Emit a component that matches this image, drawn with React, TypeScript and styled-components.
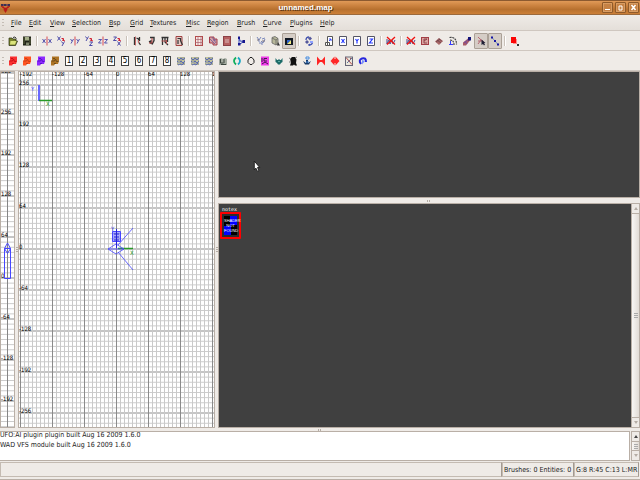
import React from "react";
import styled, { createGlobalStyle, css } from "styled-components";

const Global = createGlobalStyle`
  *, *::before, *::after { box-sizing: border-box; }
  html, body { margin: 0; padding: 0; background: #efebe7; }
  body { font-family: "DejaVu Sans Condensed", "DejaVu Sans", sans-serif; font-size: 7px; color: #222; }
  button { font: inherit; color: inherit; margin: 0; padding: 0; border: 0; background: none; }
  svg { display: block; }
`;

const Window = styled.div`
  display: flex;
  flex-direction: column;
  height: 100vh;
  overflow: hidden;
  background: #efebe7;
`;

const TitleBar = styled.header`
  display: grid;
  grid-template-columns: 12px 1fr 41px;
  align-items: center;
  flex: none;
  height: 15px;
  border-top: 1px solid #8c5a30;
  border-bottom: 1px solid #9c6a3c;
  background: linear-gradient(#e09a58, #cf8643 30%, #b8712f 65%, #cc8038);
`;

const Title = styled.h1`
  margin: 0;
  font-family: "Liberation Sans", sans-serif;
  font-size: 8px;
  line-height: 12px;
  text-align: center;
  color: #fff;
  text-shadow: 1px 1px 0 #5e3512;
`;

const WindowButtons = styled.div`
  display: flex;
  justify-content: flex-end;
  gap: 2px;
  padding-right: 1px;
`;

const WindowButton = styled.button`
  display: grid;
  place-items: center;
  width: 11px;
  height: 11px;
  border: 1px solid #8f5a2a;
  border-radius: 1px;
  background: #c68245;
  box-shadow: inset 0 0 0 1px #d99c62;
`;

const MenuBar = styled.nav`
  display: flex;
  align-items: center;
  flex: none;
  height: 16px;
  padding-left: 2px;
  border-bottom: 1px solid #cfc7c0;
  background: linear-gradient(#efebe7, #e4dfd9);
`;

const MenuList = styled.div`
  display: flex;
  gap: 7px;
  padding-left: 5px;
`;

const MenuItem = styled.button<{ $w: number }>`
  flex: none;
  width: ${(p) => p.$w}px;
  line-height: 12px;
  text-align: left;
  white-space: nowrap;
`;

const ToolBar = styled.div`
  display: flex;
  align-items: center;
  flex: none;
  height: 20px;
  padding-left: 2px;
  border-bottom: 1px solid #cfc7c0;
`;

const Grip = styled.span`
  flex: none;
  width: 2px;
  height: 8px;
  margin-right: 2px;
  background: repeating-linear-gradient(#c5bdb5 0 1px, transparent 1px 3px);
`;

const ToolButton = styled.button<{ $on?: boolean }>`
  display: grid;
  place-items: center;
  flex: none;
  width: 14px;
  height: 16px;
  border-radius: 1px;
  ${(p) =>
    p.$on &&
    css`
      border: 1px solid #aaa096;
      background: #d5cdc6;
    `}
`;

const Separator = styled.span`
  flex: none;
  width: 6px;
  height: 10px;
  background: linear-gradient(90deg, transparent 2px, #c9c1b9 2px 3px, #fff 3px 4px, transparent 4px);
`;

const NumberBox = styled.span`
  display: block;
  width: 8px;
  height: 10px;
  border: 1px solid #444;
  background: #fff;
  color: #000;
  font-size: 8px;
  line-height: 8px;
  text-align: center;
`;

const Work = styled.main`
  display: grid;
  grid-template-columns: 15px 3px minmax(0, 197fr) 3px minmax(0, 422fr);
  flex: 1;
  min-height: 0;
`;

const Column = styled.div`
  display: grid;
  grid-template-rows: minmax(0, 127fr) 5px minmax(0, 225fr);
  min-height: 0;
`;

const Pane = styled.section<{ $dark?: boolean }>`
  display: flex;
  min-width: 0;
  min-height: 0;
  overflow: hidden;
  border: 1px solid #b9afa6;
  background: ${(p) => (p.$dark ? "#404040" : "#fff")};
`;

const Canvas = styled.svg`
  flex: 1;
  min-width: 0;
  height: 100%;
`;

const Label = styled.text`
  font-family: "DejaVu Sans Condensed", sans-serif;
  font-size: 6px;
`;

const Handle = styled.div<{ $row?: boolean }>`
  display: grid;
  place-items: center;
  flex: none;
  ${(p) => p.$row && "height: 3px;"}
  &::before {
    content: "";
    width: ${(p) => (p.$row ? 4 : 2)}px;
    height: ${(p) => (p.$row ? 2 : 5)}px;
    background: repeating-linear-gradient(
      ${(p) => (p.$row ? "90deg" : "180deg")}, #b5ada5 0 1px, transparent 1px 2px);
  }
`;

const PaneHandle = styled(Handle)`
  align-self: center;
`;

const Textures = styled.div`
  flex: 1;
  padding: 3px 1px;
`;

const Tile = styled.figure`
  display: flex;
  flex-direction: column;
  width: 21px;
  margin: 0;
`;

const TileName = styled.figcaption`
  padding-left: 2px;
  font: 5px/5px "DejaVu Sans Mono", monospace;
  color: #fff;
`;

const TileImage = styled.div`
  height: 27px;
  padding: 2px;
  border: 2px solid #f00;
  border-radius: 1px;
  display: flex;
  flex-direction: column;
  justify-content: center;
  background: conic-gradient(#00f 0 25%, #000 0 50%, #00f 0 75%, #000 0) content-box, #2c2c2c;
  color: #fff;
  font: 4px/5px "Liberation Sans", sans-serif;
  text-align: center;
`;

const Scroll = styled.div`
  display: flex;
  flex-direction: column;
  flex: none;
  width: 8px;
  border-left: 1px solid #b9afa6;
  background: #d6cec6;
`;

const ScrollButton = styled.button`
  display: grid;
  place-items: center;
  flex: none;
  height: 9px;
  background: #efebe7;
`;

const Thumb = styled.div`
  display: grid;
  place-items: center;
  flex: 1;
  border: solid #b9afa6;
  border-width: 1px 0;
  background: linear-gradient(90deg, #f8f6f4, #e2dcd6);
  &::before {
    content: "";
    width: 4px;
    height: 5px;
    background: repeating-linear-gradient(#aaa 0 1px, transparent 1px 2px);
  }
`;

const Console = styled.section`
  display: flex;
  flex: none;
  gap: 1px;
  height: 30px;
`;

const Log = styled.div`
  display: flex;
  flex-direction: column;
  justify-content: flex-end;
  flex: 1;
  overflow: hidden;
  padding-bottom: 10px;
  border: 1px solid #b9afa6;
  border-left-width: 0;
  background: #fff;
`;

const LogLine = styled.p`
  flex: none;
  margin: 0;
  line-height: 10px;
  white-space: nowrap;
`;

const ConsoleScroll = styled(Scroll)`
  border: 1px solid #b9afa6;
  width: 9px;
`;

const StatusBar = styled.footer`
  display: grid;
  grid-template-columns: 1fr 72px 65px;
  flex: none;
  height: 19px;
  padding: 1px 1px 2px 0;
  border-bottom: 1px solid #b9afa6;
`;

const StatusCell = styled.div`
  padding-left: 1px;
  border: 1px solid #c4bbb2;
  border-right-color: #a39a91;
  overflow: hidden;
  white-space: nowrap;
  line-height: 15px;
`;

const Pointer = styled.svg`
  position: absolute;
  left: 253px;
  top: 160px;
  pointer-events: none;
`;

const menus: [string, number][] = [
  ["File", 11], ["Edit", 14], ["View", 15], ["Selection", 30], ["Bsp", 14], ["Grid", 13], ["Textures", 29],
  ["Misc", 14], ["Region", 23], ["Brush", 19], ["Curve", 20], ["Plugins", 23], ["Help", 16],
];

const NAVY = "#23239a";
const RED = "#d02030";

const letterPath: Record<string, [string, string]> = {
  x: ["M0.5 3l3 4M3.5 3l-3 4", "M6.5 3l3 4M9.5 3l-3 4"],
  y: ["M0.5 3l1.5 2M3.5 3l-2.5 4.5", "M6.5 3l1.5 2M9.5 3l-2.5 4.5"],
  z: ["M0.5 3.5h3l-3 3.5h3", "M6.5 3.5h3l-3 3.5h3"],
};

const flip = (axis: string) => (
  <>
    <path d={letterPath[axis].join("")} stroke={NAVY} strokeOpacity=".75" fill="none" />
    <path d="M5 0.5v9" stroke={RED} strokeOpacity=".8" />
  </>
);

const turn = (axis: string) => (
  <>
    <path d={letterPath[axis][0]} transform="translate(1 -2.5)" stroke={NAVY} strokeOpacity=".8" fill="none" />
    <path d={letterPath[axis === "x" ? "y" : axis === "y" ? "z" : "x"][0]} transform="translate(5 2.5)" stroke={NAVY} strokeOpacity=".8" fill="none" />
    <path d="M5.5 2.500h2v2.500M6 4l3 1" stroke={RED} fill="none" />
  </>
);

const paint = (a: string, b: string) => (
  <>
    <path d="M2 0.5h7v4.500l-1 3h-3l-1 1.500h-3v-5h1z" fill={a} />
    <path d="M1.5 5h3l1-2 1 2.500h2M3 2.500h2M4 7.500h2" stroke={b} fill="none" />
  </>
);

const axisBox = (d: string) => (
  <>
    <path d="M1.5 0.5h7v9h-7z" fill="#fff" stroke="#556" />
    <path d={d} stroke="#2438ff" strokeWidth="1.2" fill="none" />
  </>
);

const cross = (
  <>
    <path d="M1 3v5l2-4 1 4 2-4 1 4 2-4" stroke="#4a4a8c" fill="none" />
    <path d="M1 1l8 7.500M9 1l-8 7.500" stroke="#f01010" strokeWidth="1.300" />
  </>
);

const waves = (
  <>
    <rect x="1" y="1" width="8" height="8" fill="#a9ac96" />
    <path d="M1 2l2 2 2-2 2 2 2-2M1 5l2 2 2-2 2 2 2-2M2 9l2-1 2 1 2-2" stroke="#5a6ab5" fill="none" />
    <path d="M3 1v2M7 4v2M2 7h2" stroke="#d8d8a8" />
  </>
);

const icons: Record<string, React.ReactNode> = {
  Open: (
    <>
      <path d="M1 2h3l1 1h3v2h1.500l-2 4.500h-6.500z" fill="#7a832c" stroke="#262b10" strokeWidth=".7" />
      <path d="M2.500 5h6l-1.500 3.500h-5z" fill="#dbe47c" />
      <path d="M5 1.500q2-1.500 3.500 1" stroke="#333" fill="none" />
    </>
  ),
  Save: (
    <>
      <rect x="1" y="0.5" width="8" height="9" fill="#202318" />
      <rect x="3" y="1" width="4" height="3.5" fill="#a4ae88" />
      <rect x="4" y="6.5" width="3" height="3" fill="#80866e" />
      <path d="M2 1v7M8 2v6" stroke="#6c754b" strokeWidth=".8" />
    </>
  ),
  "Flip x": flip("x"), "Rotate x": turn("x"),
  "Flip y": flip("y"), "Rotate y": turn("y"),
  "Flip z": flip("z"), "Rotate z": turn("z"),
  "Complete tall": (
    <>
      <path d="M2.500 1v8M4.500 2l2 1v3l2 3M7.500 1v4" stroke="#333" strokeWidth="1.300" fill="none" />
      <path d="M3.500 0.500v9M6.500 4v3" stroke="#c46a6a" />
    </>
  ),
  "Partial tall": (
    <>
      <path d="M4 1.500h4v3l-2 4M3 6l2-1v3" stroke="#333" strokeWidth="1.400" fill="none" />
      <path d="M6 2v5M3 7h3" stroke="#b34242" />
    </>
  ),
  "Select touching": (
    <>
      <path d="M1.500 1.500h7M2.500 1v8M5 2v4l3 3M7.500 2v4" stroke="#333" strokeWidth="1.300" fill="none" />
      <path d="M1.500 5h5M6.500 4v4" stroke="#b35252" />
    </>
  ),
  "Select inside": (
    <>
      <path d="M2 0.500h6v9h-6z" fill="#e4c9c4" stroke="#a04242" />
      <path d="M3.500 2.500h3v2l2 4.500M4 4v4" stroke="#333" strokeWidth="1.200" fill="none" />
    </>
  ),
  "CSG subtract": (
    <>
      <rect x="1.500" y="0.500" width="7" height="9" fill="#f8e8e5" stroke="#b34a4a" />
      <path d="M4 0v10M7 0v10M1 3.500h8M1 6.500h8" stroke="#a8606a" strokeWidth=".7" />
    </>
  ),
  "CSG merge": (
    <>
      <path d="M1.500 1h4.500v2h3v6h-4v-2h-3.500z" fill="#dba0a0" stroke="#a23c4a" />
      <path d="M2 3l5 5M4 1l4 6M5 4h3" stroke="#6a5a9c" strokeWidth=".8" />
    </>
  ),
  Hollow: (
    <>
      <rect x="1.500" y="0.500" width="7" height="9" fill="#b56060" stroke="#8c4046" />
      <rect x="3" y="3" width="4" height="4" fill="#c98e8e" />
    </>
  ),
  Clipper: (
    <>
      <path d="M3 1l1 4 4 .5-5 3z" stroke="#3448bd" fill="none" />
      <path d="M2 0.500h2v2.500h-2zM2 7h2.500v2.500h-2.500zM6.500 4h2.500v3h-2.500z" fill="#16168e" />
    </>
  ),
  "Change views": (
    <>
      <path d="M1 1l2 3 2-3M3 4v2M6 3l3-1M5 5l2 2 2-4M3 7h3v2" stroke="#7a88bb" fill="none" />
      <path d="M6 5h3M1 4h2" stroke="#655c68" strokeWidth=".8" />
    </>
  ),
  "Texture view": (
    <>
      <path d="M2 1.500l3-1 3 2v5l-2 1.500-4-2z" fill="#b8b89a" stroke="#666" strokeWidth=".8" />
      <path d="M2 2l4 2 2-1.500M6 4v5" stroke="#666" fill="none" strokeWidth=".8" />
      <path d="M8 6l2 3.500h-3z" fill="#333" />
    </>
  ),
  "Textured bsp": (
    <>
      <rect x="1" y="2" width="8" height="7" fill="#111822" />
      <path d="M3 8v-4h4z" fill="#2c62d0" />
      <path d="M3 8h4v-4z" fill="#f0e880" />
    </>
  ),
  "Cubic clip": (
    <>
      <path d="M2 4q0-3 3-3M8.500 6q0 3-4 3" stroke="#3e4fae" strokeWidth="1.300" fill="none" />
      <path d="M4 2.500l2-2 2 2-2 2zM1 6l2-2 2 2-2 2z" fill="#55589c" />
      <path d="M6 5h3v2h-3z" fill="#8fa1ff" />
      <path d="M4 9l2-1.500v2.500z" fill="#3e4fae" />
    </>
  ),
  "Free scaling": (
    <>
      <path d="M3.500 0.500h5v9h-5zM1.500 6.500h4v3h-4z" fill="#fff" stroke="#555" />
      <path d="M5 5l2-2M5 3h2v2" stroke="#3448ff" fill="none" />
    </>
  ),
  "Scale x": axisBox("M3.500 3l3 4M6.500 3l-3 4"),
  "Scale y": axisBox("M3.500 3l1.500 2M6.500 3l-1.500 2v2.500"),
  "Scale z": axisBox("M3.500 3h3l-3 4h3.500"),
  "Ignore models": cross,
  "Ignore entities": cross,
  "Show patches": (
    <>
      <rect x="1.500" y="1.500" width="7" height="7" fill="#dba4a0" stroke="#a33e46" />
      <path d="M7 3h-3v4h3M4 5l3-2" stroke="#7d343e" fill="none" strokeWidth=".8" />
    </>
  ),
  "Patch wireframe": (
    <>
      <path d="M1 5.500l4-3.500 4 3-4 4z" fill="#a86868" />
      <path d="M3 4l4 3M5 2.500l3 3M2 6l4-3" stroke="#633a42" strokeWidth=".7" />
    </>
  ),
  "Patch bend": (
    <>
      <path d="M1.500 1.500q7-1 7 7M2 4q4 0 4 5" stroke="#444" strokeWidth="1.200" strokeDasharray="2 .7" fill="none" />
      <path d="M2.500 5v4M1 8.500h4" stroke="#363cff" fill="none" />
    </>
  ),
  "Patch weld": (
    <>
      <path d="M1 6.500l5-4 2 2-4 5h-3z" fill="#a85b68" />
      <path d="M2 7l5-4M3 5l2 3" stroke="#744b9c" />
      <path d="M6 1h3v3.500h-3z" fill="#151579" />
    </>
  ),
  "Patch drill": (
    <>
      <path d="M2 1l3 3-3 4M2 5h5M4 3l4 3" stroke="#b56672" fill="none" />
      <path d="M5.500 3.500v5.500l1.500-1 1 1.500 1-1-1-1.500h1.500z" fill="#202036" />
    </>
  ),
  "Show chains": (
    <>
      <path d="M2 1.500l6 7" stroke="#7894b5" />
      <path d="M1 0.500h2v2h-2zM4 4h2v2h-2zM7 7.500h2v2h-2z" fill="#1717a4" />
    </>
  ),
  Refresh: (
    <>
      <path d="M3 3h4v5h-4z" fill="#ff8c8c" />
      <path d="M1 1h5v6h-5z" fill="#fb0505" />
      <path d="M7 8h2v2h-2z" fill="#333" />
    </>
  ),
  "Slick": paint("#fa3030", "#c81018"),
  "Ladder": paint("#ff5320", "#c84014"),
  "Water": paint("#8d28ff", "#5a10c8"),
  "Wood": paint("#ae7424", "#6c4b1a"),
  "Waves one": waves, "Waves two": waves, "Waves three": waves,
  "Terrain": (
    <>
      <path d="M1 3l2-1 2 1 2-1 2 1v6h-8z" fill="#a3aaa0" />
      <path d="M2.500 3v4h3M3 8.500h5M6 3v4" stroke="#3c463e" fill="none" />
    </>
  ),
  "Cycle": (
    <>
      <path d="M4 1.500q-4 3.500 0 7" stroke="#0fae5c" strokeWidth="1.800" fill="none" />
      <path d="M6 1.500q4 3.500 0 7" stroke="#16a7c4" strokeWidth="1.800" fill="none" />
    </>
  ),
  "Ring": <path d="M4 1.500h2l2 2.500v2.500l-2 2h-2l-2-2v-2.500z" stroke="#222" fill="none" />,
  "Magnet": (
    <>
      <rect x="1" y="0.500" width="8" height="9" fill="#f03cea" />
      <path d="M2 8l3-2 3 2M7 2.500h-3v2.500h3M2 2v4" stroke="#451850" fill="none" />
    </>
  ),
  "Plant": (
    <>
      <path d="M1.500 2l1.500 2h1l1-1 1 1h1l1.500-2v4l-1.500 1-1 1.500h-2l-1-1.500-1.500-1z" fill="#1c6b68" />
      <path d="M4 5.500h2" stroke="#59aaa0" />
    </>
  ),
  "Bug": (
    <>
      <path d="M2 3l2-2h3l1.500 2.500-.5 3.500 1 2.500h-2l-1-1-1 1h-3l1-3z" fill="#111" />
      <path d="M1 2l2 1M9 1l-2 1M1 6h2" stroke="#777" />
    </>
  ),
  "Anchor": (
    <>
      <path d="M1 5l2 3.500h4l2-3.500-3 2v-3h-2v3z" fill="#183b67" />
      <path d="M4 1h3v2h-3zM4 6h3" stroke="#468ce0" fill="none" />
    </>
  ),
  "Collapse": <path d="M1 0.500l3 3.500h2l3-3.500v9l-3-3.500h-2l-3 3.500z" fill="#ff2424" />,
  "Expand": <path d="M4.500 0.500v9l-4-4.500zM5.500 0.500l4 4.500-4 4.500zM4 3h2v4h-2z" fill="#ff2828" />,
  "No draw": (
    <>
      <rect x="1.500" y="1" width="7" height="8.500" fill="#ece7dc" stroke="#667" />
      <path d="M2 1.500l6 7M6 2.500h2" stroke="#b34d4d" />
      <path d="M3 7l5-5" stroke="#5d78a0" />
    </>
  ),
  "Redo": (
    <>
      <path d="M3 8q-3-4 1-5.500t4 3.500" stroke="#2626dd" strokeWidth="2" fill="none" />
      <path d="M4 4l3 1-3 3.500z" fill="#7890ff" />
    </>
  ),
};

const topTools = [
  "Open", "Save", "|", "Flip x", "Rotate x", "Flip y", "Rotate y", "Flip z", "Rotate z", "|",
  "Complete tall", "Partial tall", "Select touching", "Select inside", "|",
  "CSG subtract", "CSG merge", "Hollow", "Clipper", "|",
  "Change views", "Texture view", "Textured bsp", "|", "Cubic clip", "|",
  "Free scaling", "Scale x", "Scale y", "Scale z", "|", "Ignore models", "|",
  "Ignore entities", "Show patches", "Patch wireframe", "Patch bend", "Patch weld", "Patch drill", "Show chains", "|",
  "Refresh",
];

const bottomTools = [
  "Slick", "Ladder", "Water", "Wood", "1", "2", "3", "4", "5", "6", "7", "8",
  "Waves one", "Waves two", "Waves three", "Terrain", "Cycle", "Ring", "Magnet", "Plant", "Bug", "Anchor",
  "Collapse", "Expand", "No draw", "Redo",
];

const pressed = ["Textured bsp", "Patch drill", "Show chains"];

function Tools({ items, label }: { items: string[]; label: string }) {
  return (
    <ToolBar role="toolbar" aria-label={label}>
      <Grip />
      {items.map((name, i) =>
        name === "|" ? (
          <Separator key={i} />
        ) : (
          <ToolButton key={i} aria-label={name} $on={pressed.includes(name)}>
            {icons[name] ? <svg width="10" height="10" viewBox="0 0 10 10">{icons[name]}</svg> : <NumberBox>{name}</NumberBox>}
          </ToolButton>
        )
      )}
    </ToolBar>
  );
}

const STEP_Y = 41;
const range = (from: number, to: number) => Array.from({ length: to - from + 1 }, (_, i) => from + i);

function gridRows(zeroY: number) {
  return range(-200, 200).map((k) => {
    const y = zeroY + (k * STEP_Y) / 8;
    return <path key={k} d={`M0 ${y}h2000`} stroke={k % 8 === 0 ? "#8c8c8c" : "#cccccc"} />;
  });
}

function rowLabels(zeroY: number, from: number, to: number) {
  return range(from, to).map((k) => (
    <Label key={k} x={0} y={zeroY - k * STEP_Y} fill="#000">{k * 64}</Label>
  ));
}

function TopView() {
  return (
    <Canvas role="img" aria-label="XY top view">
      {gridRows(177)}
      {range(-24, 400).map((k) => (
        <path key={k} d={`M${97.5 + k * 4} 0v2000`} stroke={k % 8 === 0 ? "#8b8b8b" : "#c9c9c9"} />
      ))}
      {rowLabels(177, -4, 4)}
      {range(-3, 3).map((k) => (
        <Label key={k} x={k * 32 + 97} y={4} fill="#000">{k * 64}</Label>
      ))}
      <path d="M20 13v16" stroke="#6969ff" strokeWidth="2" />
      <path d="M20 28.500h13" stroke="#289a28" strokeWidth="1.500" />
      <Label x="12" y="19" fill="#4545ff">Y</Label>
      <Label x="27" y="34" fill="#289a28">X</Label>
      <path d="M99 176.500h15" stroke="#289a28" strokeWidth="1.500" />
      <Label x="111" y="183" fill="#289a28">X</Label>
      <g stroke="#4646ff" fill="none">
        <path d="M89 177l8-5 8 5-8 5zM89 177h16M99 173l15-17M99 180l15 18" strokeWidth=".8" />
        <path d="M93.500 159.500h8v10h-8z" fill="#4646ff" fillOpacity=".45" />
        <path d="M97.500 157v19M95 162h5M95 165h5M95 168h5" stroke="#2525d4" />
      </g>
      <Label x="92" y="159" fill="#3535df">Y</Label>
    </Canvas>
  );
}

function SideView() {
  return (
    <Canvas role="img" aria-label="Z view">
      {gridRows(206)}
      <path d="M6.500 0v2000" stroke="#858585" />
      {rowLabels(206, -3, 5)}
      <path d="M3.500 176.500h6v30h-6zM6.500 171l3 5.500-3 5-3-5z" stroke="#4646ff" fill="none" />
    </Canvas>
  );
}

const arrow = (down: boolean, color: string) => (
  <svg width="4" height="3" viewBox="0 0 4 3">
    <path d={down ? "M0 0h4l-2 3z" : "M0 3h4l-2-3z"} fill={color} />
  </svg>
);

export default function App() {
  return (
    <>
      <Global />
      <Window>
        <TitleBar>
          <svg width="12" height="10" viewBox="0 0 12 10">
            <path d="M1 1h9v2h-9z" fill="#383352" />
            <path d="M1 3l3 1v3l1.500 2.500 1.500-2.500v-3l3-1-2 2h-5z" fill="#b91b17" stroke="#b91b17" strokeWidth=".6" />
            <path d="M3 2h1M6 2h2" stroke="#b85c5c" />
          </svg>
          <Title>unnamed.map</Title>
          <WindowButtons>
            <WindowButton aria-label="Minimize">
              <svg width="7" height="7"><path d="M1 5.500h5" stroke="#fff" /></svg>
            </WindowButton>
            <WindowButton aria-label="Maximize">
              <svg width="7" height="7"><path d="M2 2h3v4h-3z" stroke="#fff" fill="none" /></svg>
            </WindowButton>
            <WindowButton aria-label="Close">
              <svg width="7" height="7"><path d="M1.500 1l4 5M5.500 1l-4 5" stroke="#fff" strokeWidth="1.500" /></svg>
            </WindowButton>
          </WindowButtons>
        </TitleBar>
        <MenuBar aria-label="Main menu">
          <Grip />
          <MenuList>
            {menus.map(([name, w]) => (
              <MenuItem key={name} $w={w}><u>{name[0]}</u>{name.slice(1)}</MenuItem>
            ))}
          </MenuList>
        </MenuBar>
        <Tools items={topTools} label="Editing" />
        <Tools items={bottomTools} label="Filters" />
        <Work>
          <Pane><SideView /></Pane>
          <PaneHandle />
          <Pane><TopView /></Pane>
          <PaneHandle />
          <Column>
            <Pane $dark aria-label="Camera" />
            <PaneHandle $row />
            <Pane $dark aria-label="Textures">
              <Textures>
                <Tile>
                  <TileName>notex</TileName>
                  <TileImage>
                    <span>SHADER</span>
                    <span>NOT</span>
                    <span>FOUND</span>
                  </TileImage>
                </Tile>
              </Textures>
              <Scroll>
                <ScrollButton aria-label="Scroll textures up">{arrow(false, "#b5ada5")}</ScrollButton>
                <Thumb />
                <ScrollButton aria-label="Scroll textures down">{arrow(true, "#b5ada5")}</ScrollButton>
              </Scroll>
            </Pane>
          </Column>
        </Work>
        <Handle $row />
        <Console aria-label="Console">
          <Log>
            <LogLine>UFO:AI plugin plugin built Aug 16 2009 1.6.0</LogLine>
            <LogLine>WAD VFS module built Aug 16 2009 1.6.0</LogLine>
          </Log>
          <ConsoleScroll>
            <ScrollButton aria-label="Scroll log up">{arrow(false, "#444")}</ScrollButton>
            <Thumb />
            <ScrollButton aria-label="Scroll log down">{arrow(true, "#b5ada5")}</ScrollButton>
          </ConsoleScroll>
        </Console>
        <StatusBar>
          <StatusCell />
          <StatusCell>Brushes: 0 Entities: 0</StatusCell>
          <StatusCell>G:8 R:45 C:13 L:MR</StatusCell>
        </StatusBar>
      </Window>
      <Pointer width="8" height="13" viewBox="0 0 7 12">
        <path d="M1 1v8l1.500-1.500 1.500 3 1.200-.6-1.200-3h2z" fill="#fff" stroke="#111" strokeWidth=".8" />
      </Pointer>
    </>
  );
}
